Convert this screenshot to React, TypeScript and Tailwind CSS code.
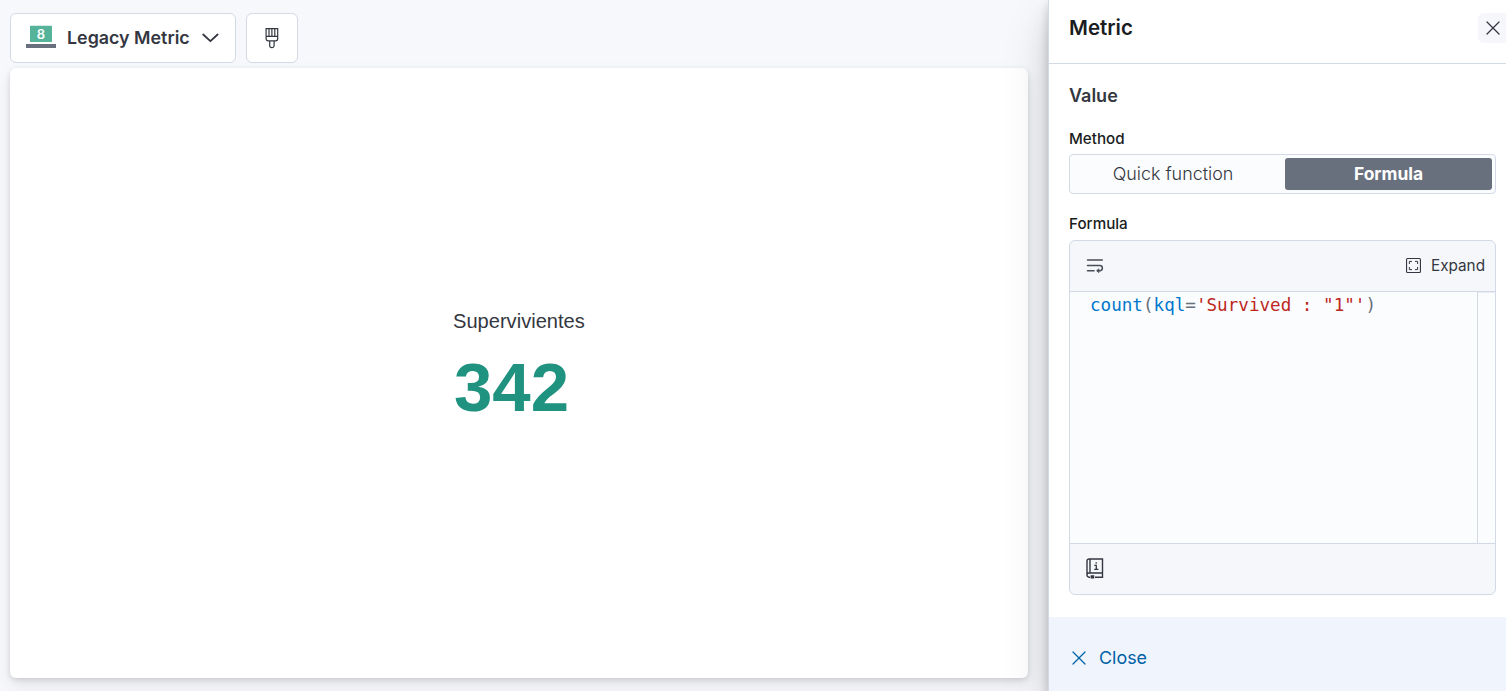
import React from "react";

function Cross({ className }: { className: string }) {
  return (
    <svg viewBox="0 0 14 14" className={className} fill="none" stroke="currentColor" strokeWidth="1.25" strokeLinecap="round">
      <path d="M1 1l12 12M13 1L1 13" />
    </svg>
  );
}

function MetricIcon() {
  return (
    <svg viewBox="0 0 30 23" className="mb-[3px] h-[23px] w-[30px] shrink-0">
      <rect x="4" y="0.7" width="22" height="16.3" rx="0.6" fill="#54b399" />
      <rect x="0" y="19" width="30" height="4" fill="#69707d" />
      <text x="15" y="13.9" textAnchor="middle" fill="#fff" fontFamily="Inter, sans-serif" fontWeight="600" fontSize="13">
        8
      </text>
    </svg>
  );
}

function BrushIcon() {
  return (
    <svg viewBox="0 0 14 22" className="h-[22px] w-[14px]" fill="none" stroke="#343741" strokeWidth="1.2">
      <path d="M1.1 1.6h11.6v10.2a2 2 0 0 1-2 2H3.1a2 2 0 0 1-2-2zM1.1 9.4h11.6M4 1.6v7.8M6.9 1.6v7.8M9.8 1.6v7.8M4.7 13.9v4.6a2.2 2.2 0 0 0 4.4 0v-4.6" />
    </svg>
  );
}

function WrapIcon() {
  return (
    <svg viewBox="0 0 18 15" className="mb-px h-[15px] w-[18px]" fill="none" stroke="#4b4e57" strokeWidth="1.5" strokeLinecap="round">
      <path d="M1.5 2h14.8M1.5 7.5h12.3a2.6 2.6 0 0 1 0 5.2h-2M1.5 12.7h6.6" />
      <path d="M12.6 11l-2 1.7 2 1.7z" fill="#4b4e57" strokeWidth="0.8" />
    </svg>
  );
}

function ExpandIcon() {
  return (
    <svg viewBox="0 0 15 15" className="mb-px h-[15px] w-[15px]" fill="none" stroke="#343741">
      <rect x="0.55" y="0.55" width="13.9" height="13.9" rx="1" strokeWidth="1.1" />
      <path d="M3.4 6V3.4H6M9 3.4h2.6V6M11.6 9v2.6H9M6 11.6H3.4V9" />
    </svg>
  );
}

function DocsIcon() {
  return (
    <svg viewBox="0 0 18 21" className="mb-px h-[21px] w-[18px]" fill="none" stroke="#343741" strokeWidth="1.4">
      <path d="M4 19.2H3a2 2 0 0 1-2-2V3a2 2 0 0 1 2-2h13.5v14H3a2 2 0 0 0-2 2M4 1v14M16.5 15v4.2H9" />
      <path d="M4.6 17.2h3.6v3.4H4.6z" fill="#343741" stroke="none" />
      <path d="M8.3 7.3h2v3.8M8.2 11.3h4.2M10.2 4.3v1.4" strokeWidth="1.3" />
    </svg>
  );
}

function Workspace() {
  return (
    <main className="flex min-w-0 flex-1 flex-col px-2.5 pt-[13px] pb-[13px]">
      <div className="flex gap-2.5">
        <button className="flex h-[50px] w-[226px] items-center rounded-md border border-[#d3dae6] bg-white pl-[15px]">
          <MetricIcon />
          <span className="ml-[11px] w-[123px] whitespace-nowrap text-left text-[17.85px] font-semibold leading-6">Legacy Metric</span>
          <svg viewBox="0 0 17 10" className="ml-3 h-2.5 w-[17px]" fill="none" stroke="#343741" strokeWidth="1.8" strokeLinecap="round" strokeLinejoin="round">
            <path d="M1.2 1.5l7.2 6.7 7.2-6.7" />
          </svg>
        </button>
        <button className="flex h-[50px] w-[52px] items-center justify-center rounded-md border border-[#d3dae6] bg-white">
          <BrushIcon />
        </button>
      </div>
      <section className="mt-[5px] flex w-[1018px] shrink-0 flex-1 justify-center rounded-md bg-white shadow-[0_1px_5px_rgba(0,0,0,0.08),0_4px_7px_rgba(0,0,0,0.06),0_8px_18px_rgba(0,0,0,0.07)]">
        <div className="w-[132px] pt-[241px] font-['Liberation_Sans',Arial,sans-serif]">
          <div className="whitespace-nowrap text-[20.1px] leading-6">Supervivientes</div>
          <div className="mt-[15px] ml-px text-[69px] font-bold leading-[79px] text-[#209280]">342</div>
        </div>
      </section>
    </main>
  );
}

function FormulaEditor() {
  return (
    <div className="flex h-[355px] flex-col overflow-hidden rounded-md border border-[#d3dae6] bg-[#f5f7fa]">
      <div className="flex h-[51px] items-center justify-between border-b border-[#d3dae6] pr-2.5 pl-4">
        <WrapIcon />
        <button className="flex items-center gap-2.5 text-[15.3px] leading-5">
          <ExpandIcon />
          <span>Expand</span>
        </button>
      </div>
      <div className="flex flex-1 bg-[#fbfcfd]">
        <code className="flex-1 whitespace-pre pl-5 font-['DejaVu_Sans_Mono',monospace] text-[17.6px] leading-[26px] text-[#69707d]">
          <span className="text-[#0077cc]">count</span>(<span className="text-[#0077cc]">kql</span>=
          <span className="text-[#bd271e]">{"'Survived : \"1\"'"}</span>)
        </code>
        <div className="w-[18px] border-l border-[#d3dae6] shadow-[inset_0_1px_0_#e9edf3]" />
      </div>
      <div className="flex h-[51px] items-center border-t border-[#d3dae6] pl-4">
        <DocsIcon />
      </div>
    </div>
  );
}

function SettingsFlyout() {
  return (
    <aside className="relative flex w-[458px] shrink-0 flex-col border-l border-[#d3dae6] bg-white shadow-[0_2px_10px_rgba(0,0,0,0.1),0_8px_10px_rgba(0,0,0,0.07),0_16px_24px_rgba(0,0,0,0.08),0_20px_44px_rgba(0,0,0,0.14)]">
      <header className="flex h-16 items-start justify-between border-b border-[#d3dae6] pt-[13px] pl-5">
        <h2 className="text-[20.5px] font-semibold leading-[30px] text-[#1a1c21]">Metric</h2>
        <button className="flex h-[30px] w-7 items-center rounded-l-md bg-[#f5f7fa] pl-2">
          <Cross className="h-3.5 w-3.5" />
        </button>
      </header>
      <div className="flex-1 pt-[19px] pr-2.5 pl-5">
        <h3 className="text-[18px] font-semibold leading-[26px]">Value</h3>
        <div className="mt-5 text-[15.2px] font-medium leading-5 text-[#1a1c21]">Method</div>
        <div className="mt-[5px] flex h-10 rounded border border-[#d3dae6] bg-[#fbfcfd] p-[3px] text-[18px] leading-8">
          <button className="w-[212px] pr-3 text-[17.9px] font-light">Quick function</button>
          <button className="flex-1 rounded-[3px] bg-[#69707d] text-[17.4px] font-bold text-white">Formula</button>
        </div>
        <div className="mt-5 mb-[6px] text-[15.2px] font-medium leading-5 text-[#1a1c21]">Formula</div>
        <FormulaEditor />
      </div>
      <footer className="flex h-[74px] items-center bg-[#f0f4fc] pt-2 pl-[23px] text-[#0061a6]">
        <Cross className="h-3.5 w-3.5" />
        <span className="ml-[13px] text-[17.9px] leading-6">Close</span>
      </footer>
    </aside>
  );
}

export default function App() {
  return (
    <div className="flex h-screen overflow-hidden bg-[#f7f8fc] font-[Inter,sans-serif] text-[#343741]">
      <Workspace />
      <SettingsFlyout />
    </div>
  );
}
